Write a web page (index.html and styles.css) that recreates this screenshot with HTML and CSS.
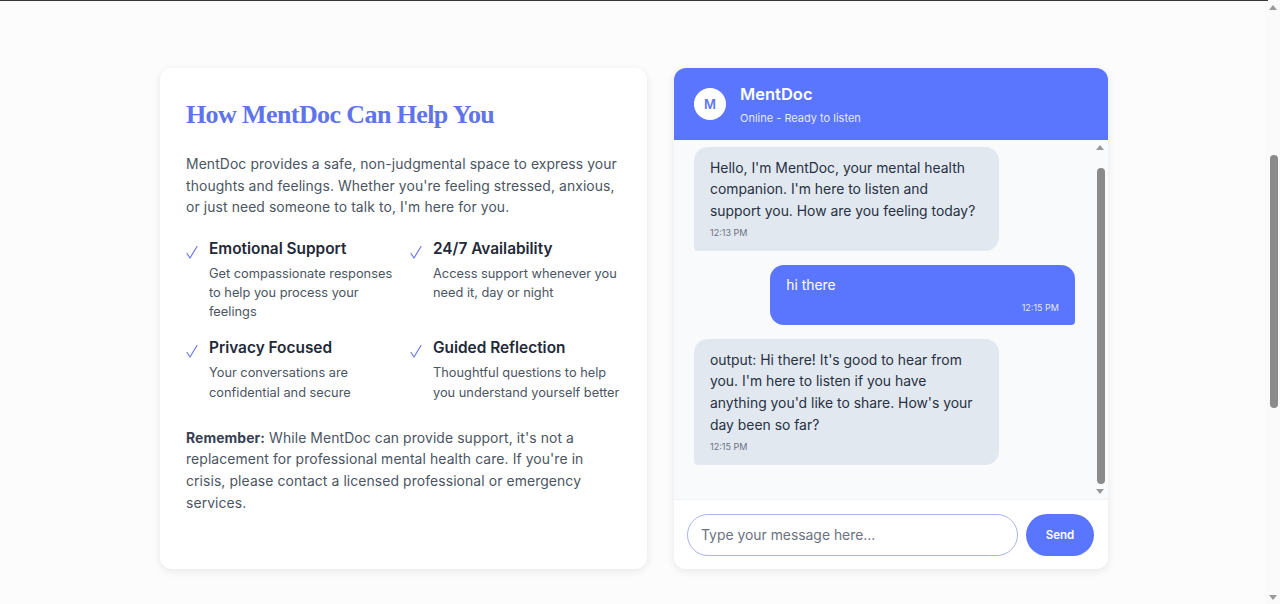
FILE: index.html
```html
<!DOCTYPE html>
<html lang="en">
<head>
<meta charset="utf-8">
<title>MentDoc</title>
<link rel="stylesheet" href="styles.css">
</head>
<body>
<div class="top-rule"></div>
<main class="help-section">
  <div class="help-grid">
    <section class="info-card">
      <h2 class="info-title">How MentDoc Can Help You</h2>
      <p class="info-lead">MentDoc provides a safe, non-judgmental space to express your thoughts and feelings. Whether you're feeling stressed, anxious, or just need someone to talk to, I'm here for you.</p>
      <div class="features">
        <div class="feature">
          <svg class="check" viewBox="0 0 12 13" width="12" height="13"><polyline points="1,7.5 4,12 11,0.5" /></svg>
          <div>
            <h3 class="feature-title">Emotional Support</h3>
            <p class="feature-desc">Get compassionate responses to help you process your feelings</p>
          </div>
        </div>
        <div class="feature">
          <svg class="check" viewBox="0 0 12 13" width="12" height="13"><polyline points="1,7.5 4,12 11,0.5" /></svg>
          <div>
            <h3 class="feature-title">24/7 Availability</h3>
            <p class="feature-desc">Access support whenever you need it, day or night</p>
          </div>
        </div>
        <div class="feature">
          <svg class="check" viewBox="0 0 12 13" width="12" height="13"><polyline points="1,7.5 4,12 11,0.5" /></svg>
          <div>
            <h3 class="feature-title">Privacy Focused</h3>
            <p class="feature-desc">Your conversations are confidential and secure</p>
          </div>
        </div>
        <div class="feature">
          <svg class="check" viewBox="0 0 12 13" width="12" height="13"><polyline points="1,7.5 4,12 11,0.5" /></svg>
          <div>
            <h3 class="feature-title">Guided Reflection</h3>
            <p class="feature-desc">Thoughtful questions to help you understand yourself better</p>
          </div>
        </div>
      </div>
      <p class="info-note"><strong>Remember:</strong> While MentDoc can provide support, it's not a replacement for professional mental health care. If you're in crisis, please contact a licensed professional or emergency services.</p>
    </section>

    <section class="chat-card">
      <div class="chat-header">
        <div class="avatar">M</div>
        <div class="chat-id">
          <div class="chat-name">MentDoc</div>
          <div class="chat-status">Online - Ready to listen</div>
        </div>
      </div>
      <div class="chat-body">
        <div class="chat-messages">
          <div class="msg msg-bot">
            <div class="msg-text">Hello, I'm MentDoc, your mental health companion. I'm here to listen and support you. How are you feeling today?</div>
            <div class="msg-time">12:13 PM</div>
          </div>
          <div class="msg msg-user">
            <div class="msg-text">hi there</div>
            <div class="msg-time">12:15 PM</div>
          </div>
          <div class="msg msg-bot">
            <div class="msg-text">output: Hi there! It's good to hear from you. I'm here to listen if you have anything you'd like to share. How's your day been so far?</div>
            <div class="msg-time">12:15 PM</div>
          </div>
        </div>
        <div class="scrollbar chat-scrollbar" aria-hidden="true">
          <span class="sb-arrow sb-up"></span>
          <span class="sb-thumb"></span>
          <span class="sb-arrow sb-down"></span>
        </div>
      </div>
      <form class="chat-input">
        <input class="chat-field" type="text" placeholder="Type your message here..." autofocus>
        <button class="send-btn" type="button">Send</button>
      </form>
    </section>
  </div>
</main>
<div class="scrollbar page-scrollbar" aria-hidden="true">
  <span class="sb-arrow sb-up"></span>
  <span class="sb-thumb"></span>
  <span class="sb-arrow sb-down"></span>
</div>
</body>
</html>
```

FILE: styles.css
```css
* { box-sizing: border-box; }
html { background: #fcfcfc; }
body {
  margin: 0;
  padding-right: 12px;
  font-family: "Inter", "Noto Sans", sans-serif;
  color: #4b5563;
  background: #fcfcfc;
  overflow: hidden;
}
.top-rule {
  height: 1px;
  background: #3b3632;
}
.help-section {
  padding: 67px 0 35px;
}
.help-grid {
  width: 948px;
  margin: 0 auto;
  display: grid;
  grid-template-columns: 487px 434px;
  gap: 27px;
}

/* ---------- left info card ---------- */
.info-card {
  background: #ffffff;
  border-radius: 12px;
  box-shadow: 0 2px 8px rgba(0,0,0,0.09);
  padding: 30px 26px 26px;
  height: 501px;
}
.info-title {
  margin: 0 0 22px;
  font-family: "Liberation Serif", "DejaVu Serif", serif;
  font-weight: 700;
  font-size: 26px;
  line-height: 34px;
  letter-spacing: -0.6px;
  color: #5f74ea;
}
.info-lead {
  margin: 0 0 19px;
  font-size: 13.9px;
  line-height: 21.6px;
  letter-spacing: 0.1px;
  color: #4b5563;
}
.features {
  display: grid;
  grid-template-columns: 1fr 1fr;
  column-gap: 13px;
  row-gap: 16px;
  margin-bottom: 26px;
}
.feature {
  display: flex;
  gap: 11px;
}
.check {
  flex: none;
  margin-top: 8px;
  fill: none;
  stroke: #6b7be6;
  stroke-width: 1.2;
  stroke-linecap: round;
  stroke-linejoin: round;
}
.feature-title {
  margin: 0 0 4px;
  font-size: 15.4px;
  line-height: 22px;
  font-weight: 600;
  color: #1f2937;
}
.feature-desc {
  margin: 0;
  font-size: 12.8px;
  line-height: 19.2px;
  color: #4b5563;
}
.info-note {
  margin: 0;
  font-size: 13.9px;
  line-height: 21.6px;
  letter-spacing: 0.1px;
  color: #4b5563;
}
.info-note strong { color: #374151; font-weight: 700; }

/* ---------- chat card ---------- */
.chat-card {
  background: #ffffff;
  border-radius: 12px;
  box-shadow: 0 2px 8px rgba(0,0,0,0.09);
  height: 501px;
  display: flex;
  flex-direction: column;
  overflow: hidden;
}
.chat-header {
  background: #5b76fe;
  height: 72px;
  flex: none;
  display: flex;
  align-items: center;
  padding: 0 20px;
  gap: 14px;
}
.avatar {
  width: 32px;
  height: 32px;
  border-radius: 50%;
  background: #ffffff;
  color: #5b76fe;
  font-weight: 600;
  font-size: 13px;
  display: flex;
  align-items: center;
  justify-content: center;
}
.chat-name {
  color: #ffffff;
  font-weight: 600;
  font-size: 16.5px;
  line-height: 22px;
}
.chat-status {
  color: rgba(255,255,255,0.85);
  font-size: 11px;
  line-height: 16px;
  margin-top: 5px;
}
.chat-body {
  flex: 1;
  position: relative;
  background: #f8fafc;
  overflow: hidden;
}
.chat-messages {
  height: 100%;
  overflow: hidden;
  padding: 7px 33px 0 20px;
  display: flex;
  flex-direction: column;
}
.msg {
  width: 80%;
  flex: none;
  padding: 10.5px 18px 10.5px 16px;
  margin-bottom: 14px;
  font-size: 13.9px;
  line-height: 21.6px;
}
.msg-bot {
  align-self: flex-start;
  background: #e2e8f0;
  color: #273142;
  border-radius: 14px 14px 14px 4px;
}
.msg-user {
  align-self: flex-end;
  background: #5b76fe;
  color: #ffffff;
  border-radius: 14px 14px 4px 14px;
  padding-right: 16px;
}
.msg-time {
  font-size: 9px;
  line-height: 14px;
  margin-top: 4px;
  color: #6b7280;
}
.msg-user .msg-time {
  text-align: right;
  color: rgba(255,255,255,0.85);
}

/* ---------- input row ---------- */
.chat-input {
  flex: none;
  margin: 0;
  height: 70px;
  padding: 14px 14px 14px 13px;
  display: flex;
  gap: 8px;
  background: #ffffff;
  border-top: 1px solid #f1f3f7;
}
.chat-field {
  flex: 1;
  height: 42px;
  border: 1px solid #a8b4f2;
  border-radius: 21px;
  padding: 0 13px;
  font-family: inherit;
  font-size: 13.9px;
  color: #1f2937;
  background: #ffffff;
  outline: none;
  caret-color: #111827;
}
.chat-field::placeholder { color: #6b7280; }
.send-btn {
  width: 68px;
  height: 42px;
  border: none;
  border-radius: 21px;
  background: #5b76fe;
  color: #ffffff;
  font-family: inherit;
  font-weight: 600;
  font-size: 11.5px;
}

/* ---------- scrollbars (drawn overlays) ---------- */
.scrollbar {
  width: 15px;
}
.page-scrollbar {
  position: fixed;
  top: 1px;
  right: 0;
  bottom: 0;
  background: #fafafa;
}
.chat-scrollbar {
  position: absolute;
  top: 0;
  right: 0;
  bottom: 0;
}
.sb-arrow {
  position: absolute;
  left: 3px;
  width: 0;
  height: 0;
  border-left: 4.5px solid transparent;
  border-right: 4.5px solid transparent;
}
.sb-up { top: 4px; border-bottom: 5px solid #9a9a9a; }
.sb-down { bottom: 4px; border-top: 5px solid #9a9a9a; }
.sb-thumb {
  position: absolute;
  left: 4px;
  width: 8px;
  border-radius: 4px;
  background: #8a8a8a;
}
.page-scrollbar .sb-thumb { top: 154px; height: 253px; left: 5px; }
.page-scrollbar .sb-arrow { left: 4px; }
.chat-scrollbar .sb-thumb { top: 28px; height: 316px; left: 4px; }
.chat-scrollbar .sb-up { top: 5px; }
.chat-scrollbar .sb-down { bottom: 5px; }
```
